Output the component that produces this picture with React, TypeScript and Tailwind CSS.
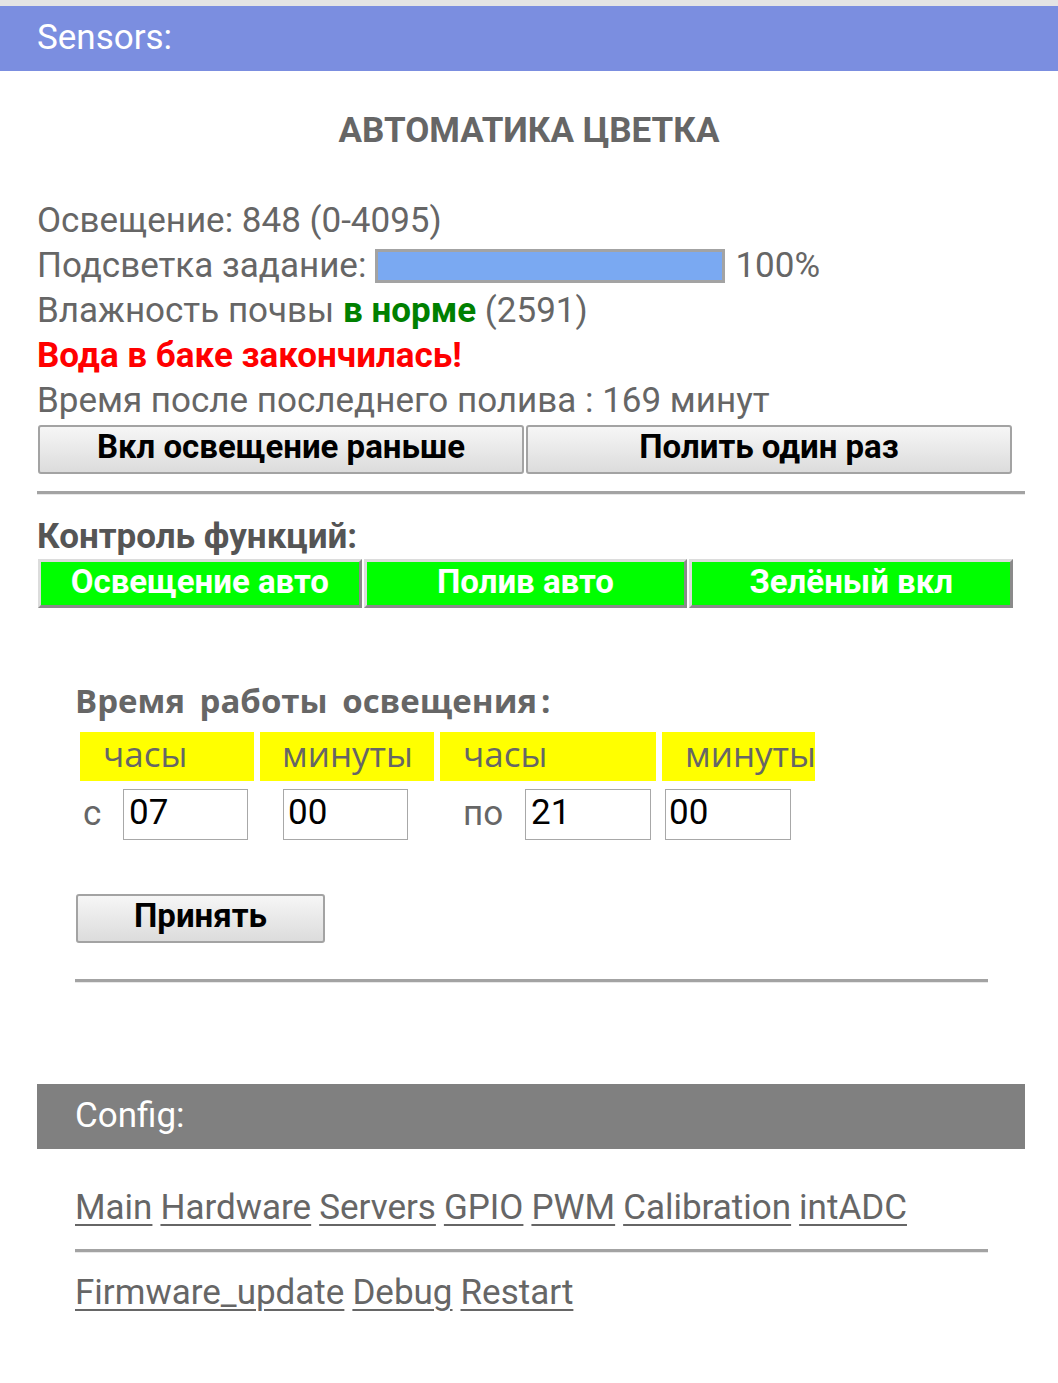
import React from 'react'

const roboto = { fontFamily: 'Roboto, "Noto Sans", sans-serif' }
const openSans = { fontFamily: '"Open Sans", "Noto Sans", sans-serif' }

const Rule = ({ className = '' }: { className?: string }) => (
    <div className={`h-[4px] border-t-[3px] border-[#a3a3a3] border-b border-b-[#e8e8e8] ${className}`} />
)

const GrayButton = ({ label, className = '' }: { label: string; className?: string }) => (
    <button className={`h-[49px] pb-[5px] rounded-[3px] border-2 border-[#a3a3a3] bg-gradient-to-b from-[#f6f6f6] to-[#dcdcdc] text-[33px] leading-[40px] font-bold text-black ${className}`}>
        {label}
    </button>
)

const GreenButton = ({ label }: { label: string }) => (
    <button className="flex-1 h-[49px] pb-[6px] border-[3px] border-t-[#dcdcdc] border-l-[#dcdcdc] border-b-[#8a8a8a] border-r-[#8a8a8a] bg-[#00ff00] text-[33px] leading-[40px] font-bold text-white">
        {label}
    </button>
)

const links1 = ['Main', 'Hardware', 'Servers', 'GPIO', 'PWM', 'Calibration', 'intADC']
const links2 = ['Firmware_update', 'Debug', 'Restart']

export default function App() {
    return (
        <div className="w-[1058px] min-h-[1383px] bg-white text-[#666]" style={roboto}>
            <div className="border-t-[6px] border-[#e4e4e4]">
                <div className="h-[65px] bg-[#7b8ee0] flex items-center px-[37px] text-[35px] text-white">Sensors:</div>
            </div>

            <div className="pl-[37px] pr-[33px]">
                <h1 className="mt-[37px] text-center text-[35px] font-bold leading-[45px] text-[#666] pr-[4px]">АВТОМАТИКА ЦВЕТКА</h1>

                <div className="mt-[45px] text-[35px] leading-[45px]">
                    <div>Освещение: 848 (0-4095)</div>
                    <div className="flex items-center">
                        <span>Подсветка задание:</span>
                        <div className="ml-[9px] w-[350px] h-[34px] border-[3px] border-[#a3a3a3] bg-[#7aa9f2]" />
                        <span className="ml-[10px]">100%</span>
                    </div>
                    <div>
                        Влажность почвы <b className="text-[#008000]">в норме</b> (2591)
                    </div>
                    <div className="font-bold text-[#ff0000]">Вода в баке закончилась!</div>
                    <div>Время после последнего полива : 169 минут</div>
                </div>

                <div className="mt-[2px] flex gap-[2px] pr-[13px] pl-[1px]">
                    <GrayButton label="Вкл освещение раньше" className="flex-1" />
                    <GrayButton label="Полить один раз" className="flex-1" />
                </div>

                <Rule className="mt-[17px]" />

                <div className="mt-[22px] text-[35px] leading-[40px] font-bold text-[#555]">Контроль функций:</div>
                <div className="mt-[2px] flex gap-[2px] pl-[1px] pr-[12px]">
                    <GreenButton label="Освещение авто" />
                    <GreenButton label="Полив авто" />
                    <GreenButton label="Зелёный вкл" />
                </div>

                <div className="pl-[38px] pr-[37px]">
                    <div className="mt-[71px] text-[33px] leading-[44px] font-bold text-[#666] [word-spacing:6px]" style={openSans}>
                        Время работы освещения<span className="ml-[4px]">:</span>
                    </div>

                    <div className="mt-[9px] ml-[5px] flex gap-[6px] text-[35px] text-[#666]" style={openSans}>
                        <div className="w-[174px] h-[49px] bg-[#ffff00] pl-[23px] leading-[44px]">часы</div>
                        <div className="w-[174px] h-[49px] bg-[#ffff00] pl-[22px] leading-[44px]">минуты</div>
                        <div className="w-[216px] h-[49px] bg-[#ffff00] pl-[23px] leading-[44px]">часы</div>
                        <div className="w-[153px] h-[49px] bg-[#ffff00] pl-[23px] leading-[44px]">минуты</div>
                    </div>

                    <div className="mt-[7px] flex items-center text-[35px]">
                        <span className="ml-[8px] w-[40px]">с</span>
                        <div className="w-[125px] h-[51px] border border-[#a8a8a8] pl-[5px] leading-[45px] text-black">07</div>
                        <div className="ml-[35px] w-[125px] h-[51px] border border-[#a8a8a8] pl-[4px] leading-[45px] text-black">00</div>
                        <span className="ml-[55px] w-[62px]">по</span>
                        <div className="w-[126px] h-[51px] border border-[#a8a8a8] pl-[5px] leading-[45px] text-black">21</div>
                        <div className="ml-[14px] w-[126px] h-[51px] border border-[#a8a8a8] pl-[3px] leading-[45px] text-black">00</div>
                    </div>

                    <GrayButton label="Принять" className="mt-[53px] ml-[1px] w-[249px]" />

                    <Rule className="mt-[36px]" />
                </div>

                <div className="mt-[101px] h-[65px] bg-[#808080] flex items-center px-[38px] text-[35px] text-white">Config:</div>

                <div className="pl-[38px] pr-[37px] text-[35px]">
                    <div className="mt-[38px] leading-[42px] flex gap-[8px]">
                        {links1.map((l) => (
                            <a key={l} className="underline underline-offset-[5px] decoration-[2px] text-[#666]">{l}</a>
                        ))}
                    </div>
                    <Rule className="mt-[20px]" />
                    <div className="mt-[19px] leading-[42px] flex gap-[8px]">
                        {links2.map((l) => (
                            <a key={l} className="underline underline-offset-[5px] decoration-[2px] text-[#666]">{l}</a>
                        ))}
                    </div>
                </div>
            </div>
        </div>
    )
}
